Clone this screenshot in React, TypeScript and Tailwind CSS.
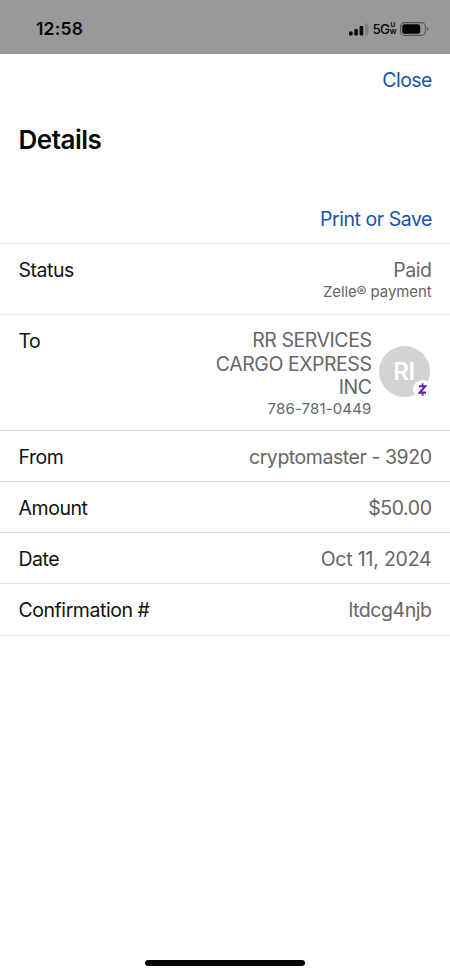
import React from 'react';

type DetailRowProps = {
  label: string;
  className: string;
  children: React.ReactNode;
};

const DetailRow: React.FC<DetailRowProps> = ({ label, className, children }) => (
  <div className={`flex justify-between border-b px-[18.5px] pt-[14px] ${className}`}>
    <dt className="text-[19.5px] leading-[24px] tracking-[-0.45px] text-[#111111]">{label}</dt>
    <dd className="text-right text-[19.5px] leading-[24px] tracking-[-0.45px] text-[#666666]">{children}</dd>
  </div>
);

const StatusBar: React.FC = () => (
  <header className="flex h-[54px] shrink-0 items-center justify-between bg-[#999999] pt-[4px] pr-[21px] pl-[36px]">
    <span className="text-[17.5px] font-semibold tracking-[0.2px] text-[#080808]">12:58</span>
    <div className="flex items-center">
      <svg width="20" height="13" viewBox="0 0 20 13" aria-hidden>
        <rect x="0" y="8.5" width="3.6" height="4" rx="1" fill="#080808" />
        <rect x="5.3" y="6" width="3.6" height="6.5" rx="1" fill="#080808" />
        <rect x="10.6" y="3" width="3.6" height="9.5" rx="1" fill="#080808" />
        <rect x="15.9" y="0.5" width="3.6" height="12" rx="1" fill="#808080" />
      </svg>
      <span className="ml-[3.5px] w-[17px] text-[13.5px] leading-[14px] font-medium tracking-[-0.9px] text-[#080808]">5G</span>
      <span className="flex w-[7px] flex-col items-center text-[6.5px] leading-[7px] font-bold text-[#080808]">
        <span>U</span>
        <span>W</span>
      </span>
      <svg className="ml-[3.5px]" width="29" height="14" viewBox="0 0 29 14" aria-hidden>
        <rect x="0.6" y="0.6" width="24.8" height="12.8" rx="4" fill="none" stroke="#555555" strokeWidth="1.1" />
        <rect x="2.2" y="2.2" width="18" height="9.6" rx="2.4" fill="#050505" />
        <path d="M27 5v4c.9-.3 1.4-1 1.4-2S27.900 5.300 27 5z" fill="#555555" />
      </svg>
    </div>
  </header>
);

const Avatar: React.FC = () => (
  <div className="relative mt-[17px] mr-[2px] ml-[7px] flex h-[51px] w-[51px] shrink-0 items-center justify-center rounded-full bg-[#d3d3d3]">
    <span className="text-[24px] leading-[24px] font-semibold tracking-[-0.5px] text-white">RI</span>
    <span className="absolute right-[-2px] bottom-[-2px] flex h-[19px] w-[19px] items-center justify-center rounded-full bg-white">
      <svg width="9" height="13" viewBox="0 0 9 13" fill="none" stroke="#5f20b8" aria-hidden>
        <path d="M1 3.200H7.200L1.800 9.600H8" strokeWidth="2.100" />
        <path d="M4.600 0.300V3M4.600 10V12.700" strokeWidth="1.700" />
      </svg>
    </span>
  </div>
);

export default function App() {
  return (
    <div className="flex h-[975px] w-[450px] flex-col overflow-hidden bg-white font-[Inter,'Liberation_Sans',sans-serif]">
      <StatusBar />

      <main className="flex-1">
        <div className="flex h-[52px] items-center justify-end px-[18px]">
          <button type="button" className="text-[19.5px] leading-[24px] tracking-[-0.5px] text-[#1454ab]">Close</button>
        </div>
        <h1 className="px-[18.5px] pt-[18px] text-[26px] leading-[32px] font-semibold tracking-[-0.5px] text-[#080808]">
          Details
        </h1>
        <div className="flex h-[88px] items-end justify-end border-b border-[#ececec] px-[18px] pb-[12px]">
          <button type="button" className="text-[19.5px] leading-[24px] tracking-[-0.45px] text-[#1454ab]">
            Print or Save
          </button>
        </div>

        <dl>
          <DetailRow label="Status" className="h-[71px] border-[#ececec]">
            <div>Paid</div>
            <div className="text-[15px] leading-[19px] tracking-[-0.1px]">Zelle® payment</div>
          </DetailRow>
          <DetailRow label="To" className="h-[116px] border-[#dedede]">
            <div className="flex">
              <div className="w-[170px]">
                <div className="leading-[23.5px]">RR SERVICES CARGO EXPRESS INC</div>
                <div className="text-[15px] leading-[17px] tracking-[0.15px]">786-781-0449</div>
              </div>
              <Avatar />
            </div>
          </DetailRow>
          <DetailRow label="From" className="h-[51px] border-[#dedede]">cryptomaster - 3920</DetailRow>
          <DetailRow label="Amount" className="h-[51px] border-[#dedede]">$50.00</DetailRow>
          <DetailRow label="Date" className="h-[51px] border-[#dedede]">
            <span className="tracking-[-0.2px]">Oct 11, 2024</span>
          </DetailRow>
          <DetailRow label="Confirmation #" className="h-[52px] border-[#ececec]">ltdcg4njb</DetailRow>
        </dl>
      </main>

      <footer className="flex shrink-0 justify-center pb-[9.5px]">
        <div className="h-[6px] w-[160px] rounded-full bg-[#050505]" />
      </footer>
    </div>
  );
}
